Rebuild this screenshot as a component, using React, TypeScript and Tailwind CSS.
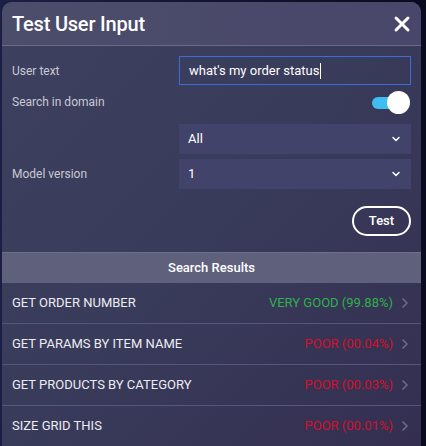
import { ChevronDown, ChevronRight, X } from "lucide-react";

const results = [
  { name: "GET ORDER NUMBER", label: "VERY GOOD (99.88%)", good: true },
  { name: "GET PARAMS BY ITEM NAME", label: "POOR (00.04%)", good: false },
  { name: "GET PRODUCTS BY CATEGORY", label: "POOR (00.03%)", good: false },
  { name: "SIZE GRID THIS", label: "POOR (00.01%)", good: false },
];

export default function App() {
  return (
    <div
      className="w-[426px] h-[446px] overflow-hidden bg-gradient-to-r from-[#1c1f44] to-[#0a0a20] pl-[2px] pr-[5px] pt-[2px]"
      style={{ fontFamily: "Roboto, 'Liberation Sans', sans-serif" }}
    >
      <div className="h-full rounded-t-[10px] overflow-hidden bg-gradient-to-br from-[#3d405f] via-[#393b5b] to-[#342f50] flex flex-col">
        <div className="h-[44px] shrink-0 flex items-center justify-between pl-[10px] pr-[7px] bg-gradient-to-r from-[#4c4d6b] to-[#48466a] border-b border-[#6a6b88]">
          <h1 className="text-[20px] font-medium text-white tracking-[-0.2px]">Test User Input</h1>
          <X className="w-[24px] h-[24px] text-white" strokeWidth={3} />
        </div>

        <div className="px-[10px] pt-[10px]">
          <div className="flex items-center justify-between h-[29px]">
            <span className="text-[12px] text-[#c9c9d3]">User text</span>
            <div className="w-[232px] h-[29px] border border-[#3d6cd6] flex items-center px-[9px] text-[13px] text-white">
              what's my order status
              <span className="w-px h-[16px] bg-white ml-px" />
            </div>
          </div>

          <div className="flex items-center justify-between h-[24px] mt-[5px]">
            <span className="text-[12px] text-[#c9c9d3]">Search in domain</span>
            <div className="relative w-[38px] h-[23px] mr-px">
              <div className="absolute left-0 top-[6px] w-[26px] h-[12px] rounded-full bg-[#3fbdf0]" />
              <div className="absolute right-0 top-0 w-[23px] h-[23px] rounded-full bg-white" />
            </div>
          </div>

          <div className="flex justify-end mt-[10px]">
            <div className="w-[232px] h-[30px] bg-[#41436a] flex items-center justify-between px-[9px] text-[13px] text-white">
              All
              <ChevronDown className="w-[12px] h-[12px] text-white" strokeWidth={3} />
            </div>
          </div>

          <div className="flex items-center justify-between mt-[5px]">
            <span className="text-[12px] text-[#c9c9d3]">Model version</span>
            <div className="w-[232px] h-[30px] bg-[#41436a] flex items-center justify-between px-[9px] text-[13px] text-white">
              1
              <ChevronDown className="w-[12px] h-[12px] text-white" strokeWidth={3} />
            </div>
          </div>

          <div className="flex justify-end mt-[17px]">
            <button className="w-[59px] h-[30px] rounded-full border-2 border-white text-[13px] font-medium text-white">
              Test
            </button>
          </div>
        </div>

        <div className="mt-[16px] h-[31px] shrink-0 bg-[#5f607c] border-t border-[#6e6f8a] flex items-center justify-center text-[13px] font-medium text-white">
          Search Results
        </div>

        {results.map((r) => (
          <div
            key={r.name}
            className="h-[41px] shrink-0 flex items-center justify-between pl-[10px] pr-[8px] border-b border-[#55577a]"
          >
            <span className="text-[13px] text-[#ececf2]">{r.name}</span>
            <div className="flex items-center gap-[4px]">
              <span className={`text-[13px] ${r.good ? "text-[#2fb14b]" : "text-[#d3102c]"}`}>{r.label}</span>
              <ChevronRight className="w-[16px] h-[16px] text-[#6b6c84]" strokeWidth={2.5} />
            </div>
          </div>
        ))}
      </div>
    </div>
  );
}
